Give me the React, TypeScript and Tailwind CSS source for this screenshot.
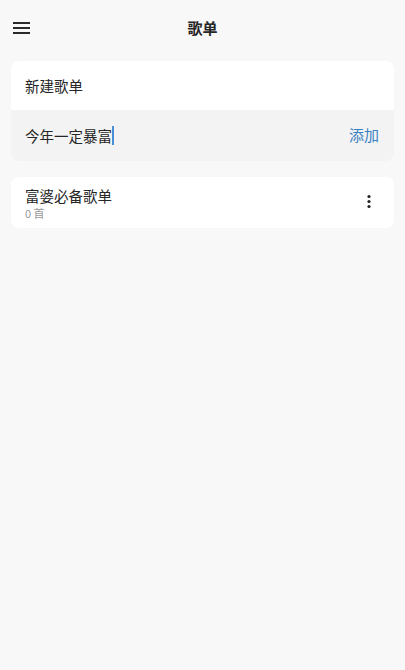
import React from "react";

const font = { fontFamily: '"Noto Sans CJK SC", "Noto Sans", sans-serif' };

export default function App() {
  return (
    <div className="min-h-[670px] w-full bg-[#f8f8f8] text-[#262626]" style={font}>
      <header className="flex h-14 items-center px-3">
        <div className="flex w-[18px] flex-col gap-[3px] pl-[1px]">
          <span className="block h-[2px] w-[17px] bg-[#2a2a2a]" />
          <span className="block h-[2px] w-[17px] bg-[#2a2a2a]" />
          <span className="block h-[2px] w-[17px] bg-[#2a2a2a]" />
        </div>
        <h1 className="-mt-[1px] flex-1 text-center text-[15px] font-bold leading-none">歌单</h1>
        <div className="w-[18px]" />
      </header>

      <div className="px-[11px] pt-[5px]">
        <div className="overflow-hidden rounded-lg bg-white">
          <div className="flex h-[49px] items-center px-[14px] text-[14.5px]">新建歌单</div>
          <div className="flex h-[51px] items-center justify-between bg-[#f3f3f3] pl-[14px] pr-[15px]">
            <div className="flex items-center text-[14.5px]">
              <span>今年一定暴富</span>
              <span className="inline-block h-[19px] w-[2px] bg-[#4a8fd6]" />
            </div>
            <button className="text-[15px] text-[#3a80c2]">添加</button>
          </div>
        </div>

        <div className="mt-4 flex h-[51px] items-center justify-between rounded-lg bg-white pl-[14px] pr-[15px]">
          <div className="flex flex-col">
            <span className="text-[14.5px] leading-[19px]">富婆必备歌单</span>
            <span className="mt-[1px] text-[11px] leading-[14px] text-[#9a9a9a]">0 首</span>
          </div>
          <svg width="20" height="20" viewBox="0 0 20 20" className="text-[#222222]">
            <circle cx="10" cy="3.5" r="1.6" fill="currentColor" />
            <circle cx="10" cy="8.5" r="1.6" fill="currentColor" />
            <circle cx="10" cy="13.5" r="1.6" fill="currentColor" />
          </svg>
        </div>
      </div>
    </div>
  );
}
